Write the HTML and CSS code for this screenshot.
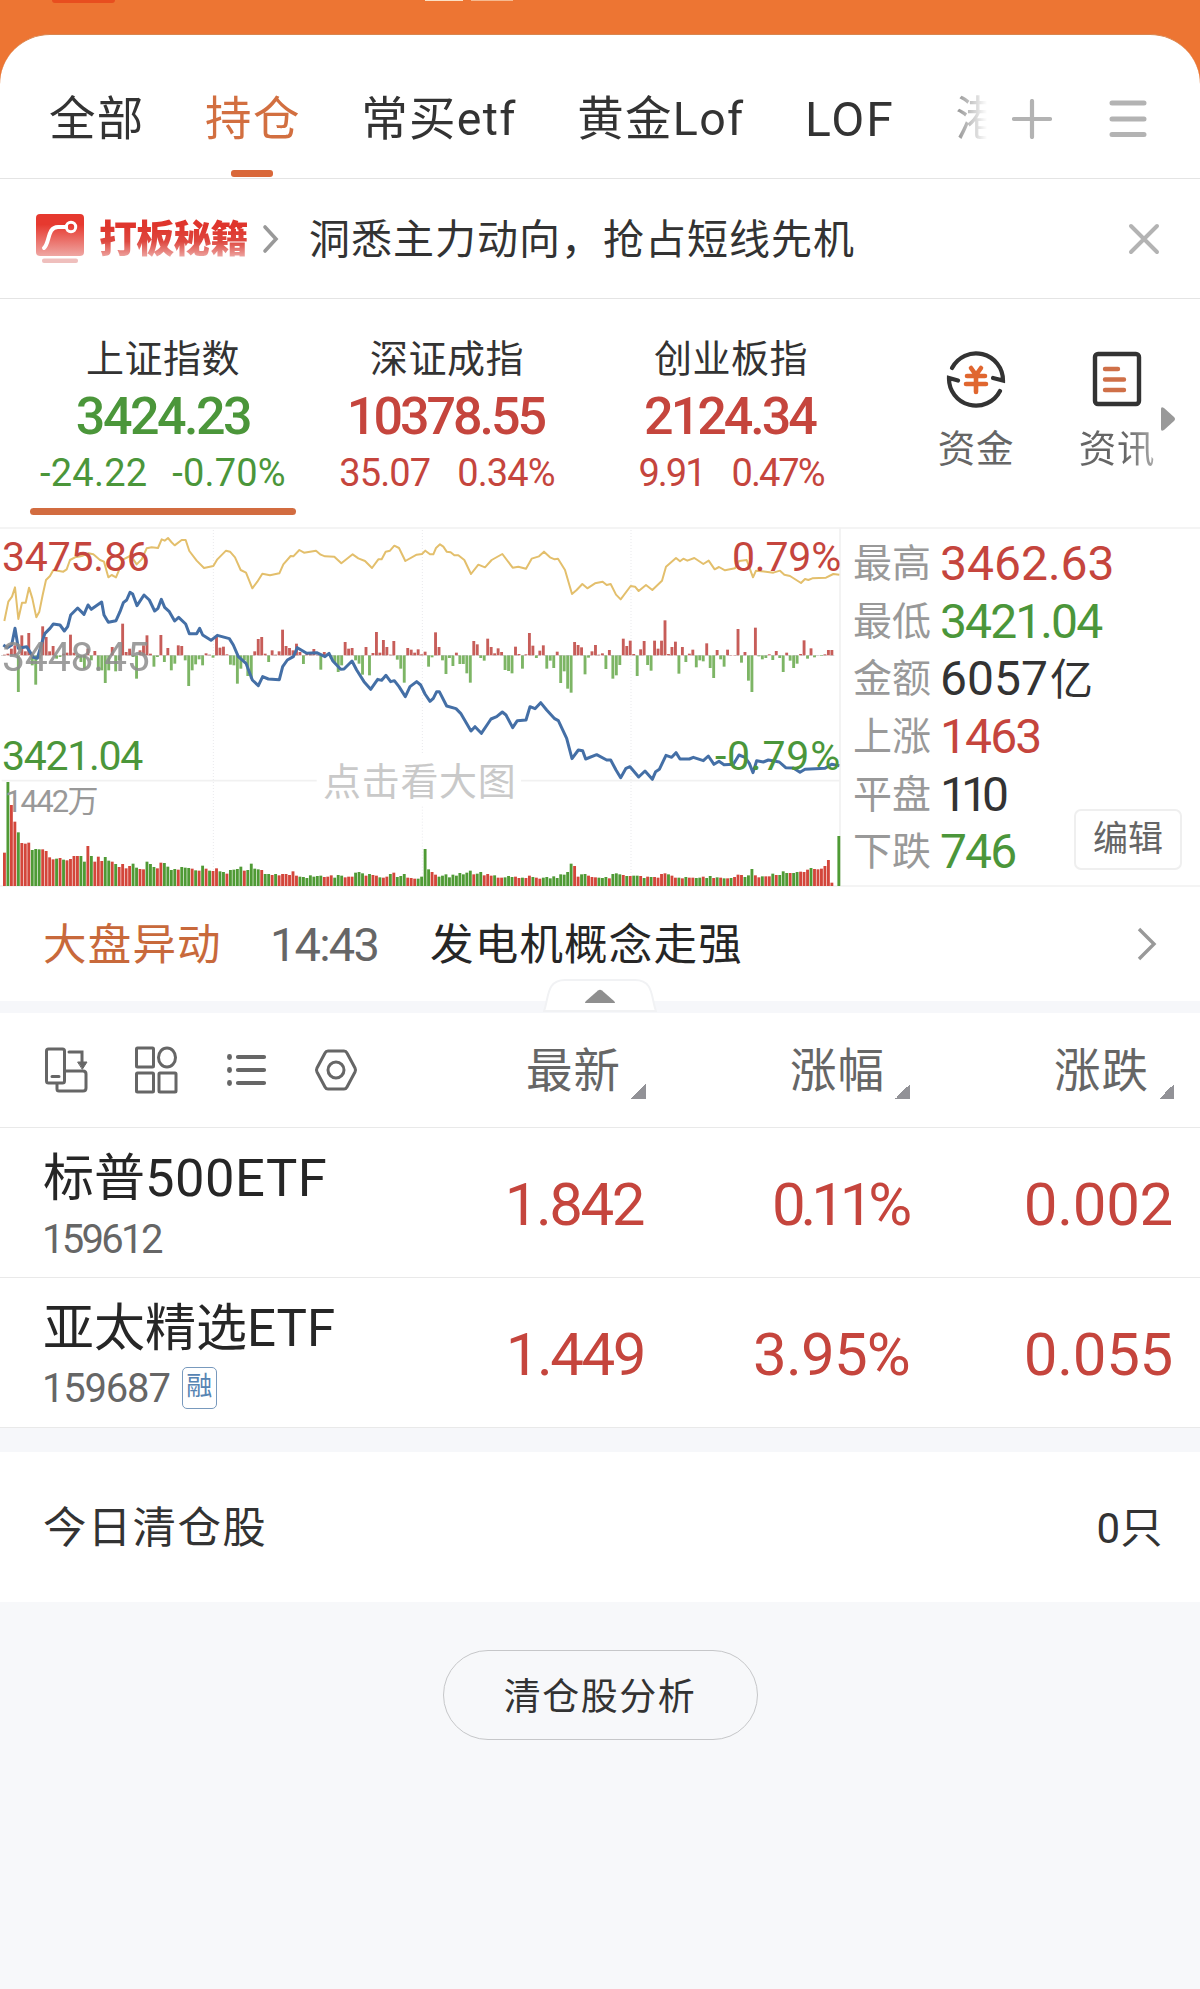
FILE: index.html
```html
<!DOCTYPE html>
<html lang="zh-CN">
<head>
<meta charset="utf-8">
<title>自选持仓</title>
<link rel="stylesheet" href="styles.css">
</head>
<body>
<div class="app">
  <header class="status"><i class="status-red"></i><i class="status-pale"></i><i class="status-pale wide"></i></header>
  <main class="sheet">
    <nav class="tabs">
      <div class="tab-list">
        <span class="tab">全部</span>
        <span class="tab active">持仓</span>
        <span class="tab">常买etf</span>
        <span class="tab">黄金Lof</span>
        <span class="tab lof">LOF</span>
        <span class="tab">港</span>
      </div>
      <svg class="tab-icon" width="40" height="40" viewBox="0 0 40 40"><path d="M2 20H38M20 2V38"/></svg>
      <svg class="tab-icon menu" width="38" height="40" viewBox="0 0 38 40"><path d="M3 4H35M3 20H35M3 35.500H35"/></svg>
    </nav>

    <section class="banner">
      <svg class="banner-logo" width="50" height="50" viewBox="0 0 50 50">
        <defs><linearGradient id="logo" x1="0" y1="0" x2="0" y2="1"><stop offset=".25" stop-color="#e6392f"/><stop offset="1" stop-color="#efa7a3"/></linearGradient></defs>
        <rect x="1" y="0" width="48" height="42" rx="4" fill="url(#logo)"/>
        <path d="M9 34C15 29 12 13 23 13H31" fill="none" stroke="#fff" stroke-width="4" stroke-linecap="round"/>
        <circle cx="36" cy="13" r="4.700" fill="none" stroke="#fff" stroke-width="3"/>
        <rect x="7" y="44.500" width="36" height="4.500" rx="2" fill="#efbfbd"/>
      </svg>
      <strong class="banner-title">打板秘籍</strong>
      <svg class="banner-chev" width="18" height="32" viewBox="0 0 18 32"><path d="M3 4L14 16L3 28"/></svg>
      <span class="banner-text">洞悉主力动向，抢占短线先机</span>
      <svg class="close" width="32" height="32" viewBox="0 0 32 32"><path d="M3 3L29 29M29 3L3 29"/></svg>
    </section>

    <section class="indices">
      <div class="index down selected">
        <span class="index-name">上证指数</span>
        <b class="index-value">3424.23</b>
        <span class="index-change loose"><span>-24.22</span><span>-0.70%</span></span>
      </div>
      <div class="index up">
        <span class="index-name">深证成指</span>
        <b class="index-value tight">10378.55</b>
        <span class="index-change"><span>35.07</span><span>0.34%</span></span>
      </div>
      <div class="index up">
        <span class="index-name">创业板指</span>
        <b class="index-value tight">2124.34</b>
        <span class="index-change narrow"><span>9.91</span><span>0.47%</span></span>
      </div>
      <div class="shortcut">
        <svg width="60" height="60" viewBox="0 0 60 60" fill="none" stroke="#333" stroke-width="4.200" stroke-linecap="round">
          <path d="M6 19A27 27 0 0 1 57 31.500L47 29"/><path d="M54 42A27 27 0 0 1 3 29L12 31.500"/>
          <g stroke="#e0662f" stroke-width="4.600"><path d="M25 19L30 26L35 19M21 27H39M20 35H40M30 26V43"/></g>
        </svg>
        <span>资金</span>
      </div>
      <div class="shortcut">
        <svg width="60" height="60" viewBox="0 0 60 60" fill="none" stroke="#333" stroke-width="4.400" stroke-linecap="round">
          <rect x="8" y="5" width="44" height="50" rx="3"/>
          <g stroke="#cf7048"><path d="M18 20H31M18 30.500H37M18 41H37"/></g>
        </svg>
        <span class="fading">资讯</span>
      </div>
      <svg class="more" width="16" height="26" viewBox="0 0 16 26"><path d="M1 3Q1 0 4 2L14 11Q16 13 14 15L4 24Q1 26 1 23Z" fill="#999"/></svg>
    </section>

    <section class="market">
      <div class="chart">
        <svg width="841" height="360" viewBox="0 21 2523 1080">
          <g fill="none" stroke="#f1f1f1" stroke-width="5"><path d="M5 782H950M1563 782H2520M2520 23V1098"/></g>
          <g fill="none" stroke="#e9e9ec" stroke-width="3" stroke-dasharray="3 6"><path d="M640 30V1098M1267 30V700M1267 860V1098M1893 30V1098"/></g>
          <g class="flows"></g>
          <path d="M3 406H2505" stroke="#999" stroke-width="2" stroke-dasharray="14 8" opacity=".7"/>
          <polyline fill="none" stroke="#e3bf6c" stroke-width="6" stroke-linejoin="round" points="13,303 25,245 36,230 45,202 55,297 66,248 77,248 87,203 97,235 109,292 118,275 128,225 138,180 150,168 160,150 190,155 200,148 210,120 225,112 245,108 265,100 280,103 300,120 312,125 325,172 335,165 348,172 358,148 370,118 390,108 400,118 410,133 425,118 440,85 455,82 474,84 485,58 494,62 504,54 514,66 524,76 545,60 557,60 568,93 590,122 612,144 640,138 652,118 678,92 690,95 705,112 722,150 738,158 757,205 772,185 787,161 810,166 838,160 850,133 872,108 880,109 898,90 912,98 948,92 962,104 975,109 1003,110 1024,130 1058,103 1075,115 1095,123 1116,144 1135,118 1145,118 1157,95 1170,92 1183,77 1197,84 1216,123 1250,104 1266,102 1276,92 1290,103 1300,103 1308,84 1320,73 1330,80 1340,95 1352,97 1363,106 1375,106 1393,120 1413,162 1435,134 1455,142 1475,120 1507,102 1538,143 1555,140 1578,146 1595,116 1617,109 1632,95 1650,112 1664,118 1674,116 1695,150 1716,222 1730,210 1747,192 1762,205 1785,190 1808,185 1820,195 1832,192 1848,224 1862,238 1892,198 1905,200 1916,213 1938,195 1957,210 1986,182 1998,140 2028,114 2040,124 2050,116 2062,122 2083,114 2110,132 2126,122 2144,148 2157,141 2175,151 2205,145 2217,123 2240,120 2259,172 2268,152 2320,158 2340,152 2353,164 2370,168 2403,189 2415,177 2425,180 2437,175 2478,173 2500,162 2518,164"/>
          <polyline fill="none" stroke="#446fa6" stroke-width="9" stroke-linejoin="round" points="10,375 22,383 35,375 45,325 55,385 80,380 100,412 112,415 128,360 135,340 150,325 160,312 180,315 193,333 203,320 212,285 233,264 252,283 264,255 274,268 305,246 312,285 325,307 348,302 360,275 370,248 380,240 390,217 398,222 411,257 432,225 448,240 464,273 474,265 484,238 494,262 508,275 524,303 536,292 557,312 568,341 590,341 599,325 608,345 633,361 652,346 688,356 700,375 715,410 738,430 757,480 775,497 788,470 805,477 838,479 848,440 862,420 880,410 892,383 920,400 950,398 975,410 987,400 998,422 1022,448 1032,447 1056,423 1070,450 1092,485 1112,508 1133,478 1145,481 1158,466 1172,485 1183,482 1197,500 1216,530 1230,500 1250,485 1262,495 1275,522 1290,544 1300,535 1310,515 1318,515 1340,558 1368,566 1382,580 1413,633 1425,620 1444,640 1463,612 1473,597 1490,590 1507,576 1518,585 1538,623 1552,602 1578,600 1590,560 1605,566 1622,548 1640,570 1664,596 1675,602 1700,655 1716,716 1735,690 1748,692 1757,717 1790,704 1820,720 1832,720 1848,750 1862,773 1878,745 1890,740 1916,771 1935,753 1957,778 1967,755 1978,748 1998,706 2015,712 2028,698 2040,717 2068,717 2080,712 2110,722 2125,708 2142,733 2157,724 2172,734 2200,733 2217,705 2235,712 2248,730 2259,758 2270,722 2290,726 2305,720 2338,726 2357,743 2380,744 2400,757 2415,748 2475,745 2495,733 2518,737"/>
          <g class="volume"></g>
        </svg>
        <span class="mark high up">3475.86</span>
        <span class="mark mid">3448.45</span>
        <span class="mark low down">3421.04</span>
        <span class="mark high right up">0.79%</span>
        <span class="mark low right down">-0.79%</span>
        <span class="mark vol">1442万</span>
        <span class="mark hint">点击看大图</span>
      </div>
      <dl class="stats">
        <dt>最高</dt><dd class="up">3462.63</dd>
        <dt>最低</dt><dd class="down tight">3421.04</dd>
        <dt>金额</dt><dd>6057<small>亿</small></dd>
        <dt>上涨</dt><dd class="up tight">1463</dd>
        <dt>平盘</dt><dd class="ones">110</dd>
        <dt>下跌</dt><dd class="down tight">746</dd>
      </dl>
      <button class="edit">编辑</button>
    </section>

    <section class="news">
      <span class="news-tag">大盘异动</span>
      <time class="news-time">14:43</time>
      <span class="news-text">发电机概念走强</span>
      <svg class="news-chev" width="22" height="38" viewBox="0 0 22 38"><path d="M3 4L18 19L3 34"/></svg>
      <svg class="handle" width="114" height="36" viewBox="0 0 114 36"><path d="M1 33C6 20 3 2 22 2H92C111 2 108 20 113 33Z" fill="#fff" stroke="#f1f2f4" stroke-width="2"/><path d="M43 25Q41 25 43 23L55 12.500Q57 11 59 12.500L71 23Q73 25 71 25Z" fill="#8f8f8f"/></svg>
    </section>

    <section class="holdings">
      <div class="row head">
        <div class="tools">
          <svg viewBox="0 0 44 50"><rect x="2.500" y="4" width="18" height="34" rx="2"/><path d="M8 31.500H15M25 7H38V18M13 39V44Q13 46 15 46H39Q42 46 42 43V29Q42 26 39 26H21"/><path d="M34 17H43L38.500 24Z" fill="#666" stroke-width="1"/></svg>
          <svg viewBox="0 0 44 50"><rect x="2.500" y="3" width="17" height="19" rx="1"/><ellipse cx="33" cy="12.500" rx="8.500" ry="9.500"/><rect x="2.500" y="28" width="17" height="19" rx="1"/><rect x="25" y="28" width="17" height="19" rx="1"/></svg>
          <svg viewBox="0 0 44 50"><path d="M14 12H40M14 25H40M14 38H40" stroke-width="4.200"/><path d="M5.500 11.500V12.500M5.500 24.500V25.500M5.500 37.500V38.500" stroke-width="4.800"/></svg>
          <svg viewBox="0 0 44 50"><path d="M14 6H30Q32 6 33 8L41 23Q42 25 41 27L33 42Q32 44 30 44H14Q12 44 11 42L3 27Q2 25 3 23L11 8Q12 6 14 6Z"/><circle cx="22" cy="25" r="8"/></svg>
        </div>
        <span class="col">最新</span><span class="col">涨幅</span><span class="col">涨跌</span>
      </div>
      <div class="row">
        <div class="fund"><span class="fund-name spaced">标普<span class="latin">500ETF</span></span><span class="fund-code"><span class="num">159612</span></span></div>
        <span class="val">1.842</span><span class="val ones">0.11%</span><span class="val wide">0.002</span>
      </div>
      <div class="row">
        <div class="fund"><span class="fund-name">亚太精选ETF</span><span class="fund-code"><span class="num second">159687</span><em>融</em></span></div>
        <span class="val near">1.449</span><span class="val percent">3.95%</span><span class="val wide">0.055</span>
      </div>
    </section>

    <section class="cleared"><span>今日清仓股</span><span class="count">0只</span></section>
  </main>
  <button class="analysis">清仓股分析</button>
</div>
<script src="chart.js"></script>
</body>
</html>
```
FILE: styles.css
```css
* { box-sizing: border-box; }
body { margin: 0; background: #f7f8fa; color: #333; font-family: Roboto, "Noto Sans CJK SC", sans-serif; }
.app { width: 1200px; height: 1989px; overflow: hidden; background: linear-gradient(#ed7533 0 100px, #f7f8fa 100px); }
.up { color: #c5453d; }
.down { color: #4b963a; }
svg { display: block; flex: none; }
button { font-family: inherit; padding: 0; }

.status { height: 34px; display: flex; align-items: flex-start; padding-left: 52px; }
.status-red { width: 63px; height: 3px; background: #e84e1f; border-radius: 0 0 12px 12px; margin-right: 310px; }
.status-pale { width: 38px; height: 1px; background: #fbe0c4; margin-right: 8px; }
.status-pale.wide { width: 42px; background: #f6b98f; }

.sheet { background: #fff; border-radius: 50px 50px 0 0; border-top: 1px solid #d9864f; }

.tabs { height: 144px; display: flex; align-items: center; border-bottom: 1px solid #e4e4e4; padding: 25px 51px 0 49px; }
.tab-list { width: 943px; height: 118px; display: flex; gap: 60.500px; overflow: hidden; margin-right: 20px; -webkit-mask-image: linear-gradient(90deg, #000 880px, transparent 938px); mask-image: linear-gradient(90deg, #000 880px, transparent 938px); }
.tab { position: relative; flex: none; font-size: 46.500px; line-height: 119px; letter-spacing: 1.300px; white-space: nowrap; }
.tab.lof { font-size: 48px; letter-spacing: 2px; }
.tab.active { color: #d26f40; }
.tab.active::after { content: ""; position: absolute; left: 26px; bottom: 1px; width: 42px; height: 7px; border-radius: 3px; background: #d9683a; }
.tab-icon { fill: none; stroke: #b3b3b3; stroke-width: 4.200; stroke-linecap: round; }
.tab-icon.menu { margin-left: 57px; stroke-width: 5; }

.banner { height: 120px; display: flex; align-items: center; border-bottom: 1px solid #e4e4e4; padding: 0 40px 0 35px; }
.banner-title { margin-left: 14px; font-size: 38px; line-height: 50px; font-weight: 900; letter-spacing: -.8px; background: linear-gradient(#df352c 25%, #de4840 55%, #eda39f 85%); -webkit-background-clip: text; background-clip: text; color: transparent; width: 151px; white-space: nowrap; }
.banner-chev { margin-left: 12px; fill: none; stroke: #999; stroke-width: 3.600; stroke-linecap: round; }
.banner-text { margin-left: 29px; padding-top: 2px; font-size: 41px; letter-spacing: 1px; line-height: 60px; }
.close { margin-left: auto; fill: none; stroke: #b3b3b3; stroke-width: 4; stroke-linecap: round; }

.indices { height: 228px; display: grid; grid-template-columns: 284px 284px 284px 33px 141px 141px; padding-left: 21px; position: relative; }
.index { display: flex; flex-direction: column; align-items: center; padding-top: 33px; position: relative; white-space: nowrap; }
.index-name { color: #333; font-size: 38px; letter-spacing: .5px; line-height: 54px; }
.index-value { font-weight: 500; font-size: 52px; line-height: 62px; letter-spacing: -2.500px; }
.index-value.tight { letter-spacing: -3px; padding-right: 3px; }
.index-change { display: flex; gap: 27px; font-size: 38px; line-height: 50px; letter-spacing: -.9px; }
.index-change.loose { letter-spacing: .2px; gap: 25px; }
.index-change.narrow { letter-spacing: -2px; }
.selected::after { content: ""; position: absolute; left: 9px; top: 209px; width: 266px; height: 7px; border-radius: 4px; background: #d26c40; }
.shortcut { grid-column: 5; display: flex; flex-direction: column; align-items: center; padding: 50px 1px 0 0; font-size: 37.500px; line-height: 50px; letter-spacing: .8px; color: #666; }
.shortcut + .shortcut { grid-column: 6; }
.shortcut span { margin-top: 15px; }
.shortcut .fading { background: linear-gradient(90deg, #666 60%, #aaa); -webkit-background-clip: text; background-clip: text; color: transparent; }
.more { position: absolute; left: 1160px; top: 107px; }

.market { height: 360px; display: flex; position: relative; border-top: 2px solid #f4f4f4; border-bottom: 2px solid #f4f4f4; }
.chart { width: 841px; height: 360px; margin-top: -2px; position: relative; }
.mark { position: absolute; left: 2px; font-size: 41px; line-height: 48px; letter-spacing: -.2px; }
.mark.right { left: auto; right: 0; }
.mark.high { top: 6px; }
.mark.mid { top: 106px; color: #8d8d8d; opacity: .85; }
.mark.low { top: 205px; letter-spacing: -1.300px; }
.mark.low.right { letter-spacing: .8px; }
.mark.vol { top: 251px; left: 5px; font-size: 31px; letter-spacing: -1.800px; color: #999; }
.mark.hint { left: 323px; top: 231px; font-size: 38px; letter-spacing: .7px; color: #c9c9c9; }
.stats { margin: 6px 0 0 12px; display: grid; grid-template-columns: 87px 1fr; grid-auto-rows: 57.700px; align-items: center; line-height: 56px; white-space: nowrap; }
.stats dt { font-size: 39px; color: #999; }
.stats dd { margin: 0; font-size: 48px; letter-spacing: 0; }
.stats .tight { letter-spacing: -1.900px; }
.stats .ones { letter-spacing: -6px; }
.stats small { font-size: 43px; margin-left: 2px; }
.edit { position: absolute; left: 1074px; top: 280px; width: 108px; height: 61px; background: #fff; border: 2px solid #efefef; border-radius: 7px; color: #666; font-size: 35px; line-height: 54px; }

.news { height: 114px; display: flex; align-items: center; padding: 0 42px 0 43px; position: relative; }
.news-tag, .news-text { font-size: 43.500px; line-height: 60px; padding-top: 4px; letter-spacing: 1.200px; }
.news-tag { width: 227px; color: #c8693b; }
.news-time { width: 160px; font-size: 47px; letter-spacing: -1.800px; color: #666; }
.news-text { color: #262626; }
.news-chev { margin-left: auto; fill: none; stroke: #999; stroke-width: 3.400; }
.handle { position: absolute; left: 543px; top: 91px; }

.holdings { border-top: 12px solid #f6f7fa; border-bottom: 24px solid #f6f7fa; }
.row { height: 150px; display: grid; grid-template-columns: 382px 264px 264px 264px; align-items: center; border-bottom: 1px solid #e9e9e9; }
.row.head { height: 115px; }
.tools { display: flex; gap: 46px; padding-left: 44px; }
.tools svg { width: 44px; height: 50px; fill: none; stroke: #666; stroke-width: 3; stroke-linecap: round; }
.col { display: flex; justify-content: flex-end; padding-top: 1px; font-size: 46.500px; letter-spacing: 1px; color: #666; line-height: 60px; }
.col::after { content: ""; align-self: flex-end; width: 15px; height: 15px; margin: 0 0 2px 10px; background: linear-gradient(135deg, transparent 50%, #929297 50%); }
.fund { padding: 2px 0 0 43px; }
.fund-name { display: block; font-size: 51px; line-height: 70px; color: #262626; }
.latin { font-size: 52.500px; letter-spacing: .5px; }
.fund-code { display: flex; align-items: center; height: 50px; font-size: 40px; color: #666; }
.num { letter-spacing: -2.700px; margin-left: -1px; }
.num.second { letter-spacing: -1.200px; }
.fund-code em { font-style: normal; margin: -1px 0 0 12px; width: 35px; height: 42px; border: 1.500px solid #7899bd; border-radius: 5px; color: #5684b3; font-size: 26px; line-height: 37px; text-align: center; }
.val { text-align: right; color: #c5453d; font-size: 60px; line-height: 70px; letter-spacing: -2.500px; padding: 4px 3px 0 0; }
.val.near { padding-right: 2px; }
.val.ones { letter-spacing: -5.200px; }
.val.percent { letter-spacing: -.8px; padding-right: 0; }
.val.wide { letter-spacing: -.3px; padding-right: 1px; }

.cleared { height: 150px; background: #fff; display: flex; justify-content: space-between; align-items: center; padding: 0 37px 6px 43px; font-size: 43.500px; letter-spacing: 1.300px; }
.cleared .count { font-size: 42px; letter-spacing: .5px; }
.analysis { display: block; margin: 48px auto 0; width: 315px; height: 90px; padding-bottom: 2px; border: 1px solid #c6c7c9; border-radius: 45px; background: transparent; color: #333; font-size: 37px; letter-spacing: 1.500px; }
```
FILE: chart.js
```js
// Per-minute series: positive values are drawn red, negative values green.
const volume = [
  100,-312,243,193,-161,129,127,130,-108,-111,-110,110,105,86,80,-82,84,-79,77,81,90,90,-90,-73,120,-90,73,88,75,-87,
  -76,73,-66,57,66,53,60,-67,-55,51,50,-73,-66,-57,53,70,-69,-58,-48,-51,49,-57,-55,-54,52,-47,46,-61,52,-46,
  45,53,-44,-42,37,-48,-49,-51,-58,46,-48,-67,-52,-50,48,-36,-36,33,-36,32,36,36,33,44,31,-28,-27,-24,-32,-28,
  -30,-31,27,28,32,-25,-33,-31,26,28,28,-40,-42,-38,31,-36,33,31,-26,25,28,-36,40,-27,-30,-36,25,24,22,-22,
  -28,-111,-50,42,34,-28,-31,-35,-26,-34,-31,-39,-35,-40,-46,35,-37,-42,32,36,31,-32,25,25,-26,-30,-27,28,24,-25,
  24,31,-27,25,22,-25,-27,-23,-29,-24,-35,-34,-42,-67,60,28,-35,-36,31,27,26,-25,-24,-27,23,-36,-38,-35,33,-30,
  30,-31,-31,30,-24,28,-27,27,25,36,38,-35,31,25,-25,23,-27,25,25,-24,-25,28,-24,-30,24,-26,25,-23,23,-24,
  27,34,33,-27,-32,-51,32,26,-29,29,29,-37,33,-33,-44,-39,39,-39,-42,43,42,49,-54,51,50,52,60,78,10,null,
  -150
];
const flows = [
  2,5,20,30,-110,60,12,67,-30,-88,-10,87,55,12,28,-10,-5,5,8,62,8,-5,-20,-40,20,-15,13,-45,-45,-83,
  -45,25,-48,-15,95,10,20,-5,-70,15,30,60,5,-34,-5,61,-20,22,-45,-25,30,28,-15,-92,-45,-27,-12,-30,6,2,
  -7,58,23,26,3,-28,-30,-85,-40,-15,-62,-70,12,49,55,5,-20,15,2,12,77,28,22,15,35,10,-26,5,7,19,
  2,-43,10,5,-10,-22,-50,-30,40,20,22,-15,-25,-58,25,-60,7,70,8,46,25,2,43,-13,-40,-82,22,17,8,18,
  3,11,-34,-6,69,25,-15,-56,-8,-32,8,-26,-26,-54,-82,43,33,-8,-16,50,25,6,21,10,-44,-47,-54,26,4,-40,
  3,67,29,-8,14,30,-40,-16,-38,11,-83,-48,-100,-112,40,31,24,-57,-7,12,31,2,6,-41,16,-70,-60,-29,50,28,
  44,4,-62,18,43,-29,-46,44,20,44,105,4,25,41,-55,25,-20,5,17,-36,-15,-18,36,-38,-68,16,-12,-34,17,1,
  1,79,-22,10,-76,-110,83,-3,-12,-8,3,-14,13,-8,-50,8,-16,-38,-25,4,45,-10,21,-6,0,-2,3,16,16
];

function bars(selector, data, base, mirrored, red, green) {
  const group = document.querySelector(selector);
  data.forEach((value, i) => {
    if (!value) return;
    const size = Math.abs(value);
    const rect = document.createElementNS("http://www.w3.org/2000/svg", "rect");
    rect.setAttribute("x", 9 + i * 10.43);
    rect.setAttribute("y", mirrored && value < 0 ? base : base - size);
    rect.setAttribute("width", 8.6);
    rect.setAttribute("height", size);
    rect.setAttribute("fill", value > 0 ? red : green);
    group.append(rect);
  });
}

bars(".volume", volume, 1098, false, "#d3463b", "#4f9a35");
bars(".flows", flows, 406, true, "#c75d59", "#7db565");
```
